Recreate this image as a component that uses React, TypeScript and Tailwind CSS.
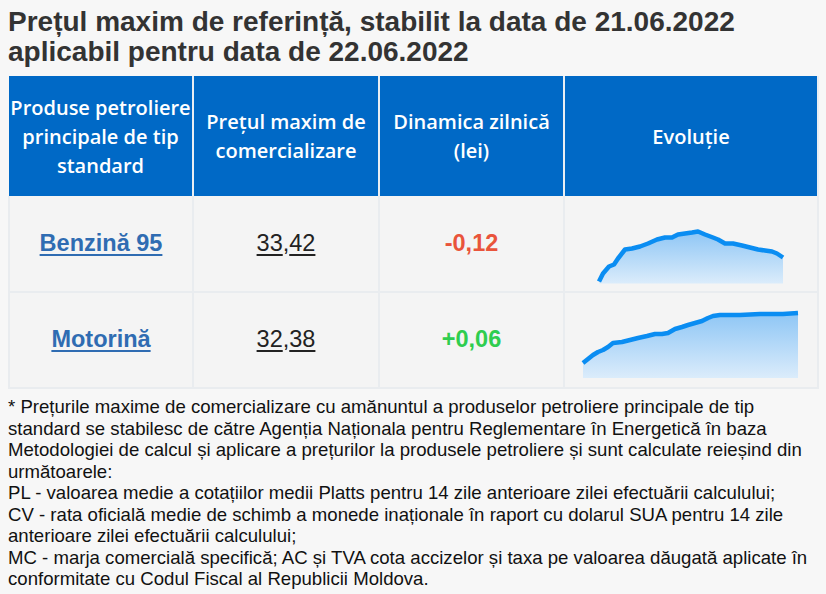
const chartA: [number, number][] = [
  [599, 281], [603, 273], [609, 266], [614, 264], [618, 258], [625, 249], [632, 248],
  [640, 246], [648, 243], [657, 239], [665, 237], [672, 237], [678, 234], [685, 233],
  [692, 232], [698, 231], [705, 234], [713, 237], [718, 239], [725, 243], [733, 243],
  [742, 245], [750, 247], [758, 249], [765, 250], [772, 251], [777, 253], [783, 257],
];

const chartB: [number, number][] = [
  [583, 362], [588, 358], [593, 354], [598, 351], [603, 349], [608, 346], [613, 342],
  [622, 341], [630, 339], [638, 337], [647, 335], [655, 333], [662, 333], [668, 332],
  [675, 328], [682, 326], [688, 324], [695, 322], [702, 320], [708, 317], [713, 315],
  [720, 314], [728, 314], [740, 314], [760, 313], [783, 313], [798, 312],
];

function Spark({ id, points, bottom, box }: { id: string; points: [number, number][]; bottom: number; box: string }) {
  const line = points.map(([x, y]) => `${x},${y}`).join(" ");
  const first = points[0];
  const last = points[points.length - 1];
  const area = `${first[0]},${bottom} ${line} ${last[0]},${bottom}`;
  return (
    <svg width="230" height="80" viewBox={box}>
      <defs>
        <linearGradient id={id} x1="0" y1="0" x2="0" y2="1">
          <stop offset="0%" stopColor="#8ec6f5" />
          <stop offset="100%" stopColor="#dbecfb" />
        </linearGradient>
      </defs>
      <polygon points={area} fill={`url(#${id})`} />
      <polyline points={line} fill="none" stroke="#0a8df2" strokeWidth="4.5" strokeLinejoin="round" strokeLinecap="butt" />
    </svg>
  );
}

const rows = [
  {
    name: "Benzină 95",
    int: "33",
    dec: "42",
    diff: "-0,12",
    color: "text-[#e9543b]",
    chart: <Spark id="ga" points={chartA} bottom={283} box="576 203.5 230 80" />,
  },
  {
    name: "Motorină",
    int: "32",
    dec: "38",
    diff: "+0,06",
    color: "text-[#2fcd4f]",
    chart: <Spark id="gb" points={chartB} bottom={377} box="576 299 230 80" />,
  },
];

export default function App() {
  return (
    <div className="min-h-[594px] w-[826px] bg-[#f7f7f7] pl-2 pr-2 text-[#222]">
      <h1 className="pt-[7px] text-[28px] font-bold leading-[30px] text-[#333] [font-family:'Liberation_Sans',Arial,sans-serif]">
        Prețul maxim de referință, stabilit la data de 21.06.2022 aplicabil pentru data de 22.06.2022
      </h1>

      <table className="mt-[9px] w-[811px] border-collapse">
        <thead>
          <tr className="h-[120px] bg-[#0069c6] text-[20px] font-semibold leading-[29px] text-white [font-family:'Open_Sans',sans-serif]">
            <th className="w-[184px] border-r-2 border-[#e9eef3] px-0 font-semibold">Produse petroliere principale de tip standard</th>
            <th className="w-[186px] border-r-2 border-[#e9eef3] px-3 font-semibold">Prețul maxim de comercializare</th>
            <th className="w-[185px] border-r-2 border-[#e9eef3] px-3 font-semibold">Dinamica zilnică (lei)</th>
            <th className="border-r-2 border-[#e9eef3] font-semibold">Evoluție</th>
          </tr>
        </thead>
        <tbody className="[font-family:'Liberation_Sans',Arial,sans-serif]">
          {rows.map((r) => (
            <tr key={r.name} className="h-[96px] bg-[#f4f4f4]">
              <td className="border-2 border-t-0 border-[#e9ecef] text-center">
                <a href="#" className="text-[23.5px] font-bold text-[#2f6cb2] underline decoration-2 underline-offset-[3px]">
                  {r.name}
                </a>
              </td>
              <td className="border-2 border-t-0 border-[#e9ecef] text-center text-[23.5px] text-[#222]">
                <a href="#" className="underline decoration-2 underline-offset-[3px]">{r.int}</a>,
                <a href="#" className="underline decoration-2 underline-offset-[3px]">{r.dec}</a>
              </td>
              <td className={`border-2 border-t-0 border-[#e9ecef] text-center text-[23.5px] font-bold ${r.color}`}>
                {r.diff}
              </td>
              <td className="border-2 border-t-0 border-[#e9ecef] p-0">
                <div className="flex justify-center">{r.chart}</div>
              </td>
            </tr>
          ))}
        </tbody>
      </table>

      <div className="mt-[7px] text-[18.6px] leading-[21.5px] text-[#111] [font-family:'Liberation_Sans',Arial,sans-serif]">
        <p>
          * Prețurile maxime de comercializare cu amănuntul a produselor petroliere principale de tip standard se
          stabilesc de către Agenția Naționala pentru Reglementare în Energetică în baza Metodologiei de calcul și
          aplicare a prețurilor la produsele petroliere și sunt calculate reieșind din următoarele:
        </p>
        <p>PL - valoarea medie a cotațiilor medii Platts pentru 14 zile anterioare zilei efectuării calculului;</p>
        <p>CV - rata oficială medie de schimb a monede inaționale în raport cu dolarul SUA pentru 14 zile anterioare zilei efectuării calculului;</p>
        <p>
          MC - marja comercială specifică; AC și TVA cota accizelor și taxa pe valoarea dăugată aplicate în
          conformitate cu Codul Fiscal al Republicii Moldova.
        </p>
      </div>
    </div>
  );
}
